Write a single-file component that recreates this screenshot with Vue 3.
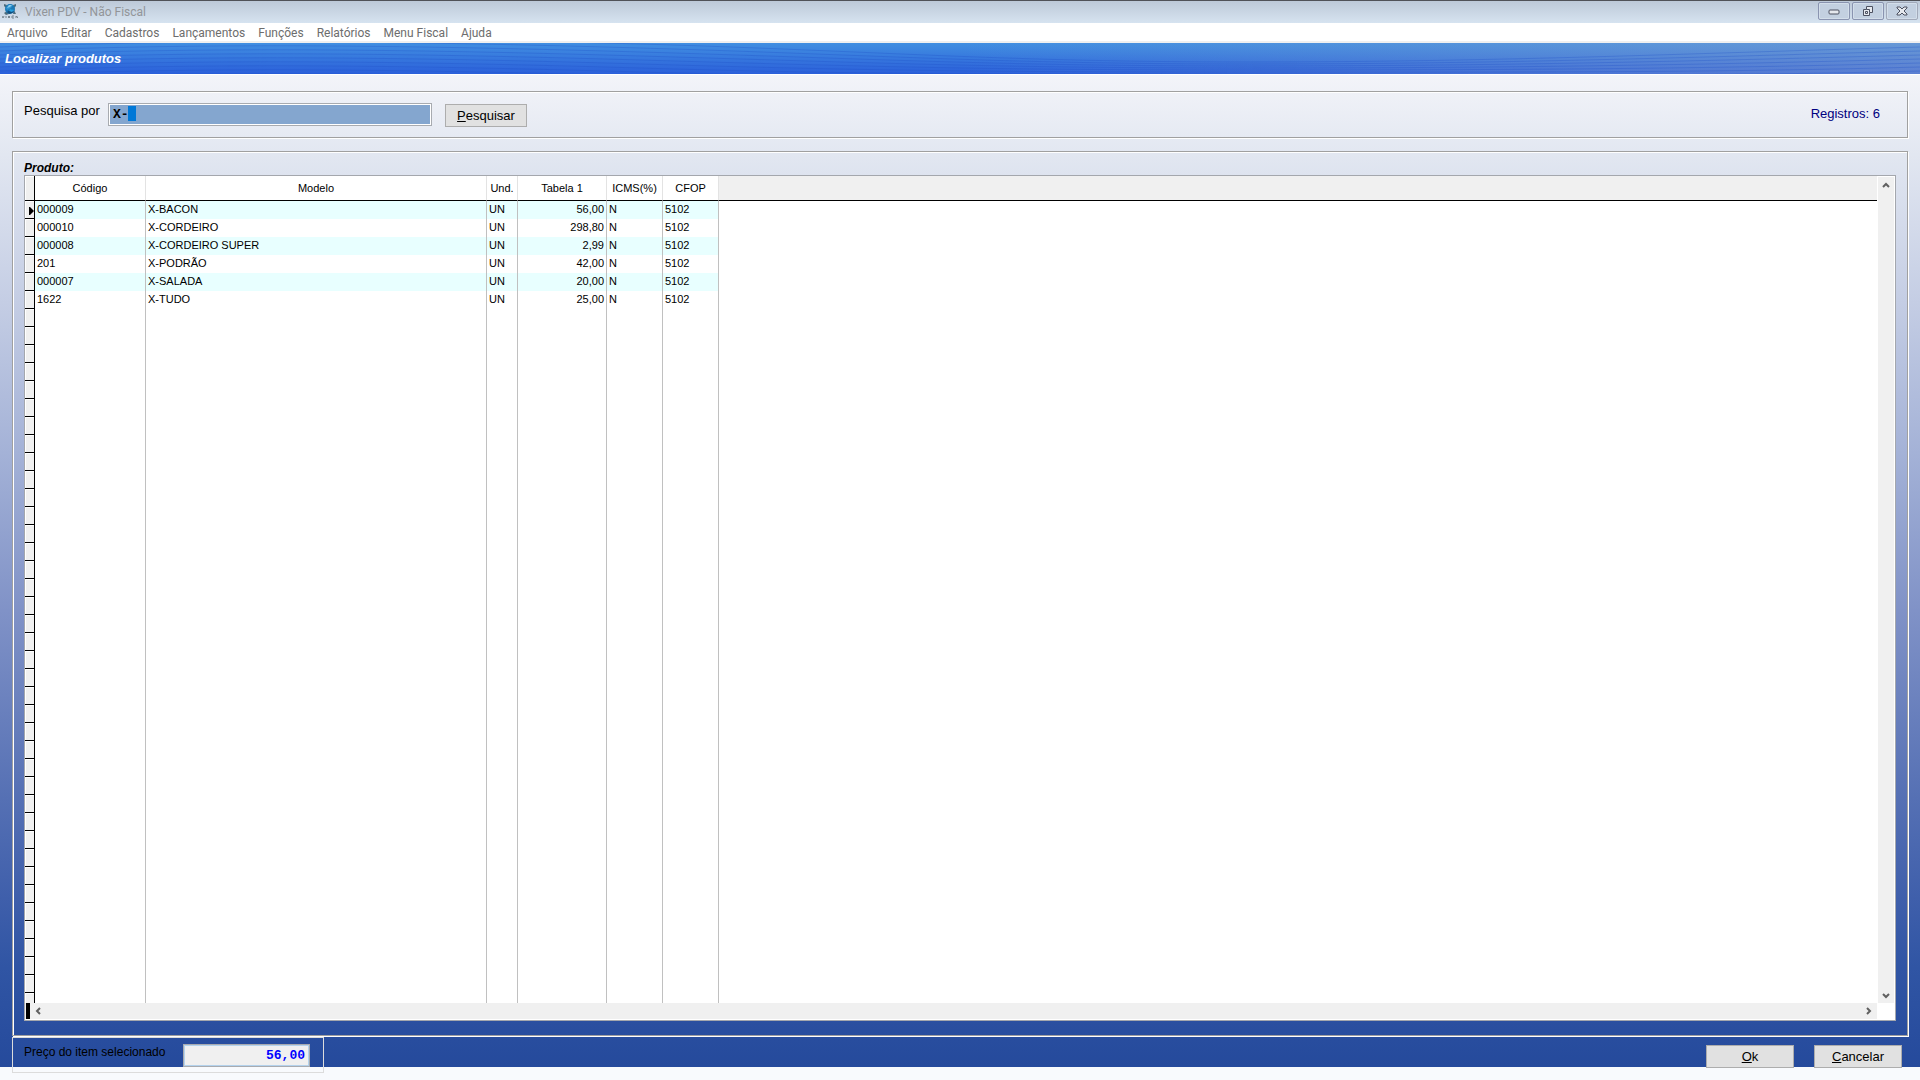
<template>
  <div class="window">
    <header class="titlebar">
      <svg class="titlebar__logo" viewBox="0 0 16 16" aria-hidden="true">
        <path d="M2 1l3 1-1 3-2-2zM14 1l-3 1 1 3 2-2zM2 10l3-2 2 3-3 1zM14 11l-3 0 1-4z" fill="#4d6b7b" />
        <circle cx="8" cy="6" r="5" fill="#1c78b4" />
        <path d="M4 5c1-3 4-4 7-3L9 5 5 7z" fill="#2f93cf" />
        <path d="M7 2l3 0-2 2-3 1z" fill="#8ccbeb" />
        <path d="M5 9l4-3 3 3-2 1-3 1z" fill="#124e7c" />
        <path d="M8 6l4 1-2 2-3-1z" fill="#25a0e0" />
        <path
          d="M0 13l1 2 1-2M4 13v2M6 13l2 2m0-2l-2 2M12 13h-2v2h2M14 15v-2l2 2v-2"
          fill="none"
          stroke="#77858f"
        />
      </svg>
      <span class="titlebar__text">Vixen PDV - Não Fiscal</span>
      <div class="titlebar__controls">
        <button class="control" aria-label="Minimizar">
          <svg viewBox="0 0 14 12"><rect x="2" y="5" width="10" height="4" rx="1" /></svg>
        </button>
        <button class="control" aria-label="Restaurar">
          <svg viewBox="0 0 14 12">
            <path d="M5.500 1.500h6v6h-3v3h-6v-6h3z" />
            <path d="M5.500 4.500h3v3M4.500 6.500h2v2h-2z" />
          </svg>
        </button>
        <button class="control control--close" aria-label="Fechar">
          <svg viewBox="0 0 14 12">
            <path d="M2 2h3l2 2 2-2h3v1l-3 3 3 3v1h-3l-2-2-2 2h-3v-1l3-3-3-3z" />
          </svg>
        </button>
      </div>
    </header>

    <nav class="menu">
      <a v-for="item in menuItems" :key="item" href="#">{{ item }}</a>
    </nav>

    <div class="banner">
      <svg class="banner__waves" viewBox="0 0 1920 31" preserveAspectRatio="none" aria-hidden="true">
        <path v-for="(wave, index) in waves" :key="index" :d="wave" />
      </svg>
      <h1>Localizar produtos</h1>
    </div>

    <main class="content">
      <form class="panel search" @submit.prevent>
        <label for="search">Pesquisa por</label>
        <div class="search__field">
          <input id="search" v-model="query" type="text" autocomplete="off" />
          <span class="search__selection"></span>
        </div>
        <button class="button search__button"><u>P</u>esquisar</button>
        <output class="search__count">Registros: {{ products.length }}</output>
      </form>

      <section class="panel results">
        <h2>Produto:</h2>
        <div class="grid">
          <div class="grid__view">
            <table>
              <colgroup>
                <col class="col-marker" />
                <col class="col-code" />
                <col class="col-model" />
                <col class="col-unit" />
                <col class="col-price" />
                <col class="col-tax" />
                <col class="col-tax" />
                <col />
              </colgroup>
              <thead>
                <tr>
                  <th class="marker"></th>
                  <th v-for="column in columns" :key="column">{{ column }}</th>
                  <th class="rest"></th>
                </tr>
              </thead>
              <tbody>
                <tr
                  v-for="(product, index) in products"
                  :key="product.code"
                  class="product"
                  @click="selected = index"
                >
                  <td class="marker">
                    <svg v-if="selected === index" viewBox="0 0 5 8" aria-hidden="true">
                      <path d="M0 0h1l4 4-4 4H0z" />
                    </svg>
                  </td>
                  <td>{{ product.code }}</td>
                  <td>{{ product.model }}</td>
                  <td>UN</td>
                  <td class="price">{{ product.price }}</td>
                  <td>N</td>
                  <td>5102</td>
                  <td class="rest"></td>
                </tr>
                <tr v-for="row in 39" :key="row">
                  <td class="marker"></td>
                  <td v-for="cell in 6" :key="cell"></td>
                  <td class="rest"></td>
                </tr>
              </tbody>
            </table>
          </div>
          <div class="scroll scroll--vertical">
            <button aria-label="Rolar para cima">
              <svg viewBox="0 0 8 8"><path d="M1 6l3-3 3 3" /></svg>
            </button>
            <button aria-label="Rolar para baixo">
              <svg viewBox="0 0 8 8"><path d="M1 3l3 3 3-3" /></svg>
            </button>
          </div>
          <div class="scroll scroll--horizontal">
            <span class="scroll__split"></span>
            <button aria-label="Rolar para a esquerda">
              <svg viewBox="0 0 8 8"><path d="M6 1l-3 3 3 3" /></svg>
            </button>
            <button aria-label="Rolar para a direita">
              <svg viewBox="0 0 8 8"><path d="M2 1l3 3-3 3" /></svg>
            </button>
          </div>
        </div>
      </section>

      <footer class="footer">
        <div class="selected">
          <label for="price">Preço do item selecionado</label>
          <input id="price" :value="products[selected].price" type="text" readonly />
        </div>
        <div class="footer__actions">
          <button class="button"><u>O</u>k</button>
          <button class="button"><u>C</u>ancelar</button>
        </div>
      </footer>
    </main>
  </div>
</template>

<script setup>
import { ref } from "vue";

const menuItems = [
  "Arquivo",
  "Editar",
  "Cadastros",
  "Lançamentos",
  "Funções",
  "Relatórios",
  "Menu Fiscal",
  "Ajuda",
];

const columns = ["Código", "Modelo", "Und.", "Tabela 1", "ICMS(%)", "CFOP"];

const products = [
  { code: "000009", model: "X-BACON", price: "56,00" },
  { code: "000010", model: "X-CORDEIRO", price: "298,80" },
  { code: "000008", model: "X-CORDEIRO SUPER", price: "2,99" },
  { code: "201", model: "X-PODRÃO", price: "42,00" },
  { code: "000007", model: "X-SALADA", price: "20,00" },
  { code: "1622", model: "X-TUDO", price: "25,00" },
];

const query = ref("X-");
const selected = ref(0);

// Thin curves: they sink towards the middle of the banner and rise again at the right
const waves = Array.from({ length: 12 }, (_, i) => {
  const y = i * 4 - 12;
  return `M0 ${y + 12}C200 ${y + 4} 400 ${y + 6} 640 ${y + 13}S1000 ${i * 2 + 19} 1250 ${i * 2 + 19}S1700 ${y + 22} 1920 ${y + 16}`;
});
</script>

<style>
body {
  background: #f8fafd;
}
</style>

<style scoped>
.window {
  display: flex;
  flex-direction: column;
  min-height: 100vh;
  box-sizing: border-box;
  padding-bottom: 13px;
  font-family: "Liberation Sans", Arial, sans-serif;
  font-size: 12px;
  color: #000;
}

.window *,
.window *::before {
  box-sizing: border-box;
}

button,
input {
  margin: 0;
  font: inherit;
  color: inherit;
  border-radius: 0;
}

.titlebar {
  display: flex;
  align-items: flex-start;
  height: 23px;
  padding: 1px 2px 0;
  border-top: 1px solid #505258;
  background: linear-gradient(#bdc9d8, #d6e3f0);
  font-family: Roboto, sans-serif;
  line-height: 20px;
  color: #929599;
}

.titlebar__logo {
  width: 16px;
  height: 16px;
  margin-top: 1px;
}

.titlebar__text {
  margin-left: 7px;
}

.titlebar__controls {
  display: flex;
  gap: 2px;
  margin-left: auto;
}

.control {
  display: flex;
  align-items: center;
  justify-content: center;
  width: 32px;
  height: 18px;
  padding: 0;
  border: 1px solid #8a94b0;
  border-radius: 2px;
  background: #c3d0e0;
  box-shadow: inset 0 0 0 1px #d3deea;
}

.control--close {
  border-color: #a2aaba;
}

.control svg {
  width: 14px;
  height: 12px;
  fill: #e6e9ee;
  stroke: #4c5160;
}

.menu {
  display: flex;
  align-items: center;
  gap: 13px;
  height: 20px;
  padding: 2px 7px 0;
  border-bottom: 2px solid #f0f0f0;
  background: #fff;
  font-family: Roboto, sans-serif;
}

.menu a {
  color: #6d6d6d;
  text-decoration: none;
}

.banner {
  position: relative;
  display: flex;
  align-items: center;
  height: 31px;
  padding: 0 5px;
  background:
    linear-gradient(90deg, transparent 50%, rgba(150, 165, 200, 0.45)),
    linear-gradient(#418fe1, #2b5fda);
}

.banner__waves {
  position: absolute;
  inset: 0;
  width: 100%;
  height: 100%;
  fill: none;
  stroke: #1d50c8;
  stroke-opacity: 0.3;
}

.banner h1 {
  position: relative;
  margin: 0;
  font-size: 13px;
  font-style: italic;
  color: #fff;
}

.content {
  display: flex;
  flex: 1;
  flex-direction: column;
  padding: 16px 12px 0;
  border-top: 1px solid #fff;
  background: linear-gradient(
    #f3f4f9,
    #e2e7f1 8%,
    #c4cde4 23%,
    #a4b2d7 38%,
    #8092c7 54%,
    #5570b4 73%,
    #3f5fab 83%,
    #3055a4 90%,
    #254a9c
  );
}

.panel {
  border: 1px solid #a0a0a0;
  box-shadow: inset 1px 1px #fff, 1px 1px #fff;
}

.search {
  display: flex;
  align-items: center;
  height: 47px;
  padding: 0 27px 0 11px;
  font-size: 13px;
}

.search label {
  width: 84px;
  padding-bottom: 8px;
}

.search__field {
  position: relative;
  width: 324px;
}

.search__field input {
  display: block;
  width: 100%;
  height: 23px;
  padding: 0 4px;
  border: 1px solid #a8abb0;
  outline: 0;
  background: #84a6cf;
  box-shadow: inset 0 0 0 1px #fff;
  font-family: "Liberation Mono", monospace;
  font-size: 13px;
  font-weight: bold;
}

.search__selection {
  position: absolute;
  top: 3px;
  left: 20px;
  width: 8px;
  height: 15px;
  background: #0078d7;
}

.button {
  width: 88px;
  height: 23px;
  padding: 0;
  border: 1px solid #adadad;
  background: #e1e1e1;
  font-size: 13px;
}

.search__button {
  width: 82px;
  margin: 2px 0 0 13px;
}

.search__count {
  margin-left: auto;
  padding-bottom: 2px;
  color: #000080;
}

.results {
  display: flex;
  flex: 1;
  flex-direction: column;
  margin-top: 13px;
  padding: 9px 11px 14px;
}

.results h2 {
  margin: 0;
  font-size: 12px;
  font-style: italic;
  line-height: 14px;
}

.grid {
  display: grid;
  flex: 1;
  grid-template: minmax(0, 1fr) 16px / minmax(0, 1fr) 18px;
  padding-bottom: 1px;
  border: 1px solid #a4a7ad;
  background: #fff;
}

.grid__view {
  height: 0;
  min-height: 100%;
  overflow: hidden;
}

table {
  width: 100%;
  table-layout: fixed;
  border-collapse: separate;
  border-spacing: 0;
  font-size: 11px;
}

.col-marker {
  width: 10px;
}

.col-code {
  width: 111px;
}

.col-model {
  width: 341px;
}

.col-unit {
  width: 31px;
}

.col-price {
  width: 89px;
}

.col-tax {
  width: 56px;
}

th {
  height: 25px;
  padding: 0;
  border-right: 1px solid #e3e3e3;
  border-bottom: 1px solid #000;
  font-weight: normal;
}

td {
  height: 18px;
  padding: 0 2px;
  border-right: 1px solid #c0c0c0;
  line-height: 16px;
  vertical-align: top;
}

.product:nth-child(odd) td {
  background: #e8ffff;
}

.price {
  text-align: right;
}

.marker,
.product:nth-child(odd) .marker {
  padding: 0;
  border-right: 1px solid #000;
  border-bottom: 1px solid #000;
  background: #f0f0f0;
  box-shadow: inset 1px 1px #fff;
}

.marker svg {
  display: block;
  width: 5px;
  height: 8px;
  margin: 6px 0 0 4px;
}

th.rest {
  border-right: 0;
  background: #f0f0f0;
}

td.rest,
.product:nth-child(odd) .rest {
  border-right: 0;
  background: #fff;
}

.scroll {
  display: flex;
  justify-content: space-between;
  background: #f0f0f0;
}

.scroll--vertical {
  flex-direction: column;
  border: 1px solid #fff;
  border-bottom: 0;
}

.scroll button {
  display: flex;
  align-items: center;
  justify-content: center;
  width: 16px;
  height: 16px;
  padding: 0;
  border: 0;
  background: transparent;
}

.scroll svg {
  width: 8px;
  height: 8px;
  fill: none;
  stroke: #606060;
  stroke-width: 2;
}

.scroll__split {
  width: 4px;
  margin-left: 1px;
  background: #000;
}

.scroll__split + button {
  margin-right: auto;
}

.footer {
  display: flex;
  height: 31px;
  justify-content: space-between;
}

.selected {
  display: flex;
  width: 312px;
  height: 36px;
  margin-top: 1px;
  padding: 6px 0 0 11px;
  border: 1px solid #dcdcdc;
}

.selected label {
  width: 159px;
  padding-top: 1px;
}

.selected input {
  width: 127px;
  height: 23px;
  padding: 0 4px;
  border: 1px solid #a8abb0;
  outline: 0;
  background: #f0f0f0;
  box-shadow: inset 0 0 0 1px #b4d2ec;
  font-family: "Liberation Mono", monospace;
  font-size: 13px;
  font-weight: bold;
  text-align: right;
  color: #0000ff;
}

.footer__actions {
  display: flex;
  gap: 20px;
  padding: 9px 6px 0 0;
}
</style>
